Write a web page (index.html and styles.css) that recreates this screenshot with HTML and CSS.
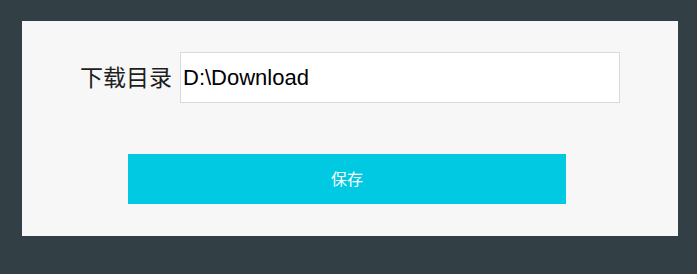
FILE: index.html
```html
<!DOCTYPE html>
<html lang="zh-CN">
<head>
  <meta charset="UTF-8" />
  <meta name="viewport" content="width=device-width, initial-scale=1.0"/>
  <title>设置</title>
  <link rel="stylesheet" href="styles.css">
</head>
<body>

  <div class="panel">
    <div class="form-row">
      <label class="form-label" for="downloadDir">下载目录</label>
      <input type="text" id="downloadDir" class="form-input" value="D:\Download" />
    </div>

    <button class="save-button">保存</button>
  </div>

</body>
</html>
```

FILE: styles.css
```css
* {
  margin: 0;
  padding: 0;
  box-sizing: border-box;
}

body {
  background: #323f45;
  padding: 21px 19px 38px 22px;
  font-family: "Liberation Sans", "Noto Sans CJK SC", sans-serif;
}

.panel {
  width: 656px;
  height: 215px;
  background: #f7f7f7;
  padding-top: 31px;
  display: flex;
  flex-direction: column;
}

.form-row {
  display: flex;
  align-items: center;
  padding-left: 58px;
  gap: 8px;
}

.form-label {
  font-family: "Noto Sans CJK SC", sans-serif;
  font-size: 23px;
  line-height: 1;
  padding-bottom: 3px;
  color: #1e1e1e;
}

.form-input {
  width: 440px;
  height: 51px;
  padding: 1px 2px;
  font-family: "Liberation Sans", "Noto Sans CJK SC", sans-serif;
  font-size: 22px;
  color: #000;
  background: #fff;
  border: 1px solid #d9d9d9;
  outline: none;
}

.save-button {
  width: 438px;
  height: 50px;
  margin: 51px 0 0 106px;
  padding-bottom: 2px;
  background: #00c9e1;
  color: #fff;
  border: none;
  font-family: "Noto Sans CJK SC", sans-serif;
  font-size: 16px;
  cursor: pointer;
}
```
